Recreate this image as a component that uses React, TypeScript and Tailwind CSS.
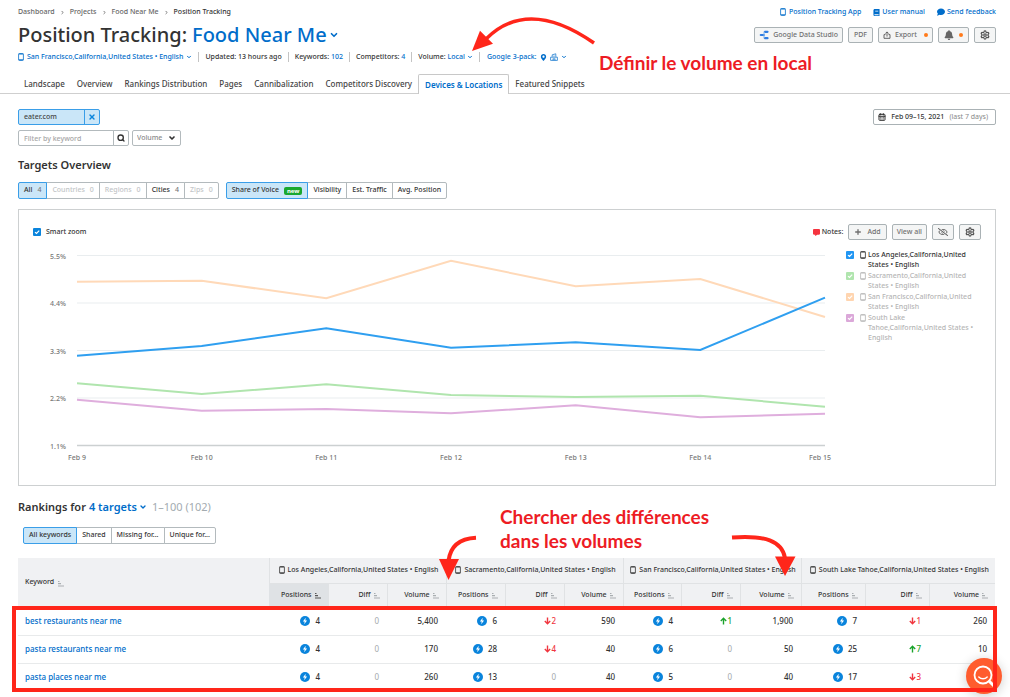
import React from "react";
import { CalendarDays, Settings, ChevronDown, ChevronRight, X, Plus, Search } from "lucide-react";
import { FaBell, FaBook, FaComment, FaCommentAlt, FaMapMarkerAlt, FaRegEyeSlash } from "react-icons/fa";

const sans = "font-['Noto_Sans','Open_Sans',sans-serif]";

function Phone({ className = "" }: { className?: string }) {
  return (
    <svg viewBox="0 0 6 8" className={"h-2 w-1.5 shrink-0 " + className} fill="none" stroke="currentColor" aria-hidden="true">
      <rect x="0.6" y="0.6" width="4.8" height="6.8" rx="0.8" strokeWidth="0.8" />
      <path d="M0.6 1h4.8M0.6 6.8h4.8" strokeWidth="0.9" />
    </svg>
  );
}

function SortIcon({ active = false }: { active?: boolean }) {
  return (
    <svg viewBox="0 0 7 8" className={active ? "h-2 w-[7px] shrink-0 text-[#555]" : "h-2 w-[7px] shrink-0 text-[#a9aeb1]"} stroke="currentColor" aria-hidden="true">
      <path d="M1 2.500h1.500M1 4.600h3M1 7h6" strokeWidth="1.100" fill="none" />
    </svg>
  );
}

function Bolt() {
  return (
    <svg viewBox="0 0 10 10" className="size-2.5 shrink-0" aria-hidden="true">
      <circle cx="5" cy="5" r="5" fill="#0a84dc" />
      <path d="M5.7 1.8 2.9 5.5h1.8l-.5 2.8 2.9-3.8H5.3z" fill="#fff" />
    </svg>
  );
}

const crumbs = ["Dashboard", "Projects", "Food Near Me"];
const tabs = ["Landscape", "Overview", "Rankings Distribution", "Pages", "Cannibalization", "Competitors Discovery", "Devices & Locations", "Featured Snippets"];
const scopes: [string, number][] = [["All", 4], ["Countries", 0], ["Regions", 0], ["Cities", 4], ["Zips", 0]];
const metrics = ["Share of Voice", "Visibility", "Est. Traffic", "Avg. Position"];
const keywordFilters = ["All keywords", "Shared", "Missing for...", "Unique for..."];

const legend = [
  { name: "Los Angeles,California,United States • English", box: "bg-[#2196f3]", text: "text-[#333]" },
  { name: "Sacramento,California,United States • English", box: "bg-[#b0e5ae]", text: "text-[#b5b5b5]" },
  { name: "San Francisco,California,United States • English", box: "bg-[#ffd5b0]", text: "text-[#b5b5b5]" },
  { name: "South Lake Tahoe,California,United States • English", box: "bg-[#dba8d9]", text: "text-[#b5b5b5]" },
];

const xs = [44, 168.7, 293.3, 418, 542.7, 667.3, 792];
const series = [
  { color: "#ffd9b8", ys: [36.7, 35.7, 53.3, 15.7, 41.3, 34, 72] },
  { color: "#b0e5ae", ys: [138.3, 149, 139.3, 150, 152, 150.7, 161.7] },
  { color: "#dfaedd", ys: [154.7, 165.7, 164, 168.3, 160.3, 172.3, 168.7] },
  { color: "#2f9ff0", ys: [110.7, 101, 83.3, 102.7, 97.3, 105, 52.7] },
];
const grid: [string, number][] = [["5.5%", 10.5], ["4.4%", 58], ["3.3%", 105.5], ["2.2%", 153], ["1.1%", 200.5]];

const groups = [
  "Los Angeles,California,United States • English",
  "Sacramento,California,United States • English",
  "San Francisco,California,United States • English",
  "South Lake Tahoe,California,United States • English",
];
const rows: { keyword: string; cells: [number, number, string][] }[] = [
  { keyword: "best restaurants near me", cells: [[4, 0, "5,400"], [6, -2, "590"], [4, 1, "1,900"], [7, -1, "260"]] },
  { keyword: "pasta restaurants near me", cells: [[4, 0, "170"], [28, -4, "40"], [6, 0, "50"], [25, 7, "10"]] },
  { keyword: "pasta places near me", cells: [[4, 0, "260"], [13, 0, "40"], [5, 0, "40"], [17, -3, "10"]] },
];
const columnWidths = [
  "w-[251px]", "w-[59px]", "w-[59px]", "w-[59px]", "w-[59px]", "w-[59px]", "w-[59px]",
  "w-[58px]", "w-[59px]", "w-[61px]", "w-[64px]", "w-[64px]", "w-[66px]",
];

const button = "flex h-4 items-center rounded-xs border border-[#aab2b5] bg-[#f4f5f5] text-[#707070]";

function Segmented({ items, label }: { items: React.ReactNode[]; label: string }) {
  return (
    <div role="group" aria-label={label} className="flex">
      {items.map((item, i) => (
        <button
          key={i}
          className={
            i === 0
              ? "relative flex h-[17px] items-center rounded-l-xs border border-[#3a9ee8] bg-[#cae6f8] px-[5px]"
              : "-ml-px flex h-[17px] items-center border border-[#b3babd] bg-white px-[5px] last:rounded-r-xs"
          }
        >
          {item}
        </button>
      ))}
    </div>
  );
}

function Diff({ value }: { value: number }) {
  if (value === 0) return <span className="font-normal text-[#a3a9ac]">0</span>;
  return (
    <span className={value > 0 ? "flex items-center justify-end text-[#1ba32c]" : "flex items-center justify-end text-[#f0363f]"}>
      <svg viewBox="0 0 7 8" className="h-2 w-[7px]" fill="none" stroke="currentColor" strokeWidth="1.400" aria-hidden="true">
        <path d={value > 0 ? "M3.500 7.500V1.500M.8 4 3.500 1.300 6.200 4" : "M3.500.5V6.500M.8 4l2.700 2.700L6.200 4"} />
      </svg>
      {Math.abs(value)}
    </span>
  );
}

function Header() {
  return (
    <header>
      <div className="flex justify-between pt-[7px] pr-3.5 pl-[18px]">
        <div>
          <nav aria-label="Breadcrumb" className="flex h-2.5 items-center gap-[5px] text-[7px] text-[#666]">
            {crumbs.map((c) => (
              <React.Fragment key={c}>
                <a href="#">{c}</a>
                <ChevronRight className="size-[5px]" strokeWidth={4} />
              </React.Fragment>
            ))}
            <span className="text-[#333]">Position Tracking</span>
          </nav>
          <h1 className="mt-1 flex h-7 items-center gap-[5px] text-[20px] font-medium text-[#333]">
            Position Tracking:
            <button className="flex items-center text-[#006dca]">
              Food Near Me
              <ChevronDown className="ml-0.5 size-2.5" strokeWidth={4} />
            </button>
          </h1>
          <div className="mt-[3px] flex h-2.5 items-center text-[7px] text-[#333]">
            <button className="flex items-center gap-[3px] pr-1.5 text-[#006dca]">
              <Phone /> San Francisco,California,United States • English
              <ChevronDown className="size-1.5" strokeWidth={4} />
            </button>
            <span className="border-l border-[#c4c4c4] px-1.5">Updated: 13 hours ago</span>
            <span className="border-l border-[#c4c4c4] px-1.5">Keywords: <a href="#" className="text-[#006dca]">102</a></span>
            <span className="border-l border-[#c4c4c4] px-1.5">Competitors: <a href="#" className="text-[#006dca]">4</a></span>
            <span className="flex items-center gap-0.5 border-l border-[#c4c4c4] px-1.5">
              Volume:
              <button className="flex items-center gap-0.5 text-[#006dca]">Local <ChevronDown className="size-1.5" strokeWidth={4} /></button>
            </span>
            <button className="flex items-center gap-[3px] border-l border-[#c4c4c4] px-[7px] text-[#006dca]">
              Google 3-pack: <FaMapMarkerAlt className="size-[7px]" />
              <svg viewBox="0 0 8 8" className="size-2" fill="none" stroke="currentColor" strokeWidth="0.7" aria-hidden="true">
                <path d="M.6 7.400V4.200h1.600V1.800L5.800.8v3.400h1.600v3.200zM3.200 3.200h1.600M2.200 4.800h3.600M3 7.400V6h2v1.400" />
              </svg>
              <ChevronDown className="size-1.5" strokeWidth={4} />
            </button>
          </div>
        </div>
        <div className="flex flex-col items-end">
          <div className="flex h-2.5 items-center gap-3 text-[7px] text-[#006dca]">
            <a href="#" className="flex items-center gap-[3px]"><Phone /> Position Tracking App</a>
            <a href="#" className="flex items-center gap-0.5"><FaBook className="size-[7px]" /> User manual</a>
            <a href="#" className="flex items-center gap-0.5"><FaComment className="size-2" /> Send feedback</a>
          </div>
          <div className="mt-2.5 flex gap-[5px] text-[7px]">
            <button className={button + " gap-1 px-1"}>
              <svg viewBox="0 0 10 10" className="size-2.5" fill="none" stroke="#2f7de1" strokeLinecap="round" aria-hidden="true">
                <path d="M6 1.800H8.500M1.800 5h3M6 8.200h2.500" strokeWidth="2.200" />
                <path d="M5 2v6" stroke="#7db2ee" strokeWidth="1" />
              </svg>
              Google Data Studio
            </button>
            <button className={button + " px-[5px]"}>PDF</button>
            <button className={button + " gap-1 px-1"}>
              <svg viewBox="0 0 8 8" className="size-2" fill="none" stroke="#555" strokeWidth="0.9" aria-hidden="true">
                <path d="M2.500 3.600H1v3.700h6V3.600H5.500M4 5.600V1M2.300 2.600 4 .9l1.700 1.700" />
              </svg>
              Export
              <span className="ml-[3px] size-1 rounded-full bg-[#ff7a1a]" />
            </button>
            <button aria-label="Notifications" className={button + " gap-[5px] px-[5px]"}>
              <FaBell className="size-2.5 text-[#666]" />
              <span className="size-1 rounded-full bg-[#ff7a1a]" />
            </button>
            <button aria-label="Settings" className={button + " px-[5px]"}><Settings className="size-2.5 text-[#555]" strokeWidth={3} /></button>
          </div>
        </div>
      </div>
      <nav aria-label="Reports" className="mt-3 flex h-5 border-b border-[#cfcfcf] pl-[18px] text-[8px] text-[#444]">
        {tabs.map((t) =>
          t === "Devices & Locations" ? (
            <a key={t} href="#" aria-current="page" className="-mb-px flex items-center rounded-t-xs border border-b-0 border-[#c8c8c8] bg-white px-1.5 font-semibold text-[#006dca]">{t}</a>
          ) : (
            <a key={t} href="#" className="flex items-center px-1.5">{t}</a>
          )
        )}
      </nav>
    </header>
  );
}

function Filters() {
  return (
    <div className="mt-[15px] flex items-start justify-between">
      <div>
        <div className="flex h-4 w-[82px] rounded-xs border border-[#3a9ee8] bg-[#cae6f8] text-[7px] text-[#444]">
          <span className="flex flex-1 items-center pl-[5px]">eater.com</span>
          <button aria-label="Remove eater.com" className="flex w-[15px] items-center justify-center border-l border-[#3a9ee8] text-[#0a84dc]">
            <X className="size-2" strokeWidth={4} />
          </button>
        </div>
        <div className="mt-[5px] flex gap-[3px] text-[7px]">
          <form className="flex" onSubmit={(e) => e.preventDefault()}>
            <input aria-label="Filter by keyword" placeholder="Filter by keyword" className="h-4 w-24 rounded-l-xs border border-[#b3babd] px-[5px] placeholder:text-[#a5a5a5]" />
            <button aria-label="Search" className="-ml-px flex h-4 w-4 items-center justify-center rounded-r-xs border border-[#b3babd] text-[#333]">
              <Search className="size-2" strokeWidth={4} />
            </button>
          </form>
          <div className="relative flex items-center">
            <select aria-label="Volume" className="h-4 w-[49px] appearance-none rounded-xs border border-[#b3babd] bg-white px-1 text-[#8a8a8a]">
              <option>Volume</option>
            </select>
            <ChevronDown className="pointer-events-none absolute right-[5px] size-2 text-[#333]" strokeWidth={5} />
          </div>
        </div>
      </div>
      <button className="flex h-4 items-center gap-[5px] rounded-xs border border-[#aab2b5] px-1 pr-[7px] text-[7px] text-[#333]">
        <CalendarDays className="size-2" strokeWidth={3} /> Feb 09–15, 2021 <span className="font-normal text-[#888]">(last 7 days)</span>
      </button>
    </div>
  );
}

function ChartCard() {
  return (
    <section aria-label="Share of voice" className="mt-2.5 border border-[#cdd0d1] px-3.5 pt-3.5 pb-[21px]">
      <div className="flex h-4 items-center justify-between text-[7px] text-[#333]">
        <label className="flex items-center gap-[5px]">
          <Check box="bg-[#0a84dc]" /> Smart zoom
        </label>
        <div className="flex items-center gap-[5px]">
          <span className="flex items-center gap-0.5"><FaCommentAlt className="size-[7px] text-[#f5333f]" /> Notes:</span>
          <button className={button + " gap-[5px] px-[5px]"}><Plus className="size-2" strokeWidth={4} />Add</button>
          <button className={button + " px-1"}>View all</button>
          <button aria-label="Hide notes" className={button + " px-[5px]"}><FaRegEyeSlash className="size-2.5 text-[#555]" /></button>
          <button aria-label="Chart settings" className={button + " px-[5px]"}><Settings className="size-2.5 text-[#555]" strokeWidth={3} /></button>
        </div>
      </div>
      <div className="mt-[5px] flex items-start">
        <svg viewBox="0 0 813 219" className="min-w-0 flex-1 text-[7px]" fill="#777">
          {grid.map(([label, y], i) => (
            <g key={label}>
              <text x="33" y={y + 3} textAnchor="end">{label}</text>
              <line x1="44" x2="792" y1={y} y2={y} stroke={i === 4 ? "#ccd0d1" : "#e9edef"} strokeWidth={i === 4 ? 1.5 : 1} />
            </g>
          ))}
          {xs.map((x, i) => (
            <text key={x} x={i === 6 ? 787 : x} y="215" textAnchor="middle">{"Feb " + (9 + i)}</text>
          ))}
          {series.map((s) => (
            <polyline key={s.color} points={s.ys.map((y, i) => xs[i] + "," + y).join(" ")} fill="none" stroke={s.color} strokeWidth="2" />
          ))}
        </svg>
        <ul className="flex w-[135px] flex-col gap-px pt-[5px] text-[7px] leading-[10px]">
          {legend.map((l) => (
            <li key={l.name}>
              <label className={"flex items-start " + l.text}>
                <span className="flex h-2.5 items-center"><Check box={l.box} /></span>
                <span className="mr-0.5 ml-1.5 flex h-2.5 items-center"><Phone /></span>
                <span className="w-[112px]">{l.name}</span>
              </label>
            </li>
          ))}
        </ul>
      </div>
    </section>
  );
}

function Check({ box }: { box: string }) {
  return (
    <span className="relative flex size-2">
      <input type="checkbox" defaultChecked className={"size-2 appearance-none rounded-[1px] " + box} />
      <svg viewBox="0 0 8 8" className="pointer-events-none absolute inset-0 size-2" fill="none" stroke="#fff" strokeWidth="1.2" aria-hidden="true">
        <path d="M2 4.100 3.500 5.500 6.200 2.700" />
      </svg>
    </span>
  );
}

function RankingsTable() {
  return (
    <div className="relative mt-3.5 mr-px">
      <button aria-label="Search help" className="absolute -right-[7px] -bottom-0.5 flex size-9 items-center justify-center rounded-full bg-[#ff5c2e] shadow-[0_2px_12px_rgba(0,0,0,0.2)]">
        <svg viewBox="0 0 24 24" className="size-6" fill="none" stroke="#fff" strokeWidth="1.8" strokeLinecap="round" aria-hidden="true">
          <circle cx="11" cy="11" r="8.500" />
          <path d="M6.800 13c2.200 2.400 6.200 2.400 8.400 0" strokeWidth="1.400" />
          <path d="m17.500 17.500 4 4" strokeWidth="3" />
        </svg>
      </button>
      <table className="w-full table-fixed border-collapse text-[7px] text-[#333]">
        <colgroup>{columnWidths.map((w, i) => <col key={i} className={w} />)}</colgroup>
        <thead className="bg-[#f0f1f3]">
          <tr className="h-[25px]">
            <th rowSpan={2} scope="col" className="pl-[7px] text-left font-medium">
              <span className="flex items-center gap-[3px]">Keyword <SortIcon /></span>
            </th>
            {groups.map((g) => (
              <th key={g} colSpan={3} scope="colgroup" className="border-b border-l border-[#e0e2e4] pl-0.5 font-medium">
                <span className="flex items-center justify-center gap-[3px] whitespace-nowrap"><Phone />{g}</span>
              </th>
            ))}
          </tr>
          <tr className="h-6">
            {groups.map((g, gi) =>
              ["Positions", "Diff", "Volume"].map((c, ci) => (
                <th key={g + c} scope="col" className={gi === 0 && ci === 0 ? "bg-[#dfe2e5] pr-[7px] font-medium" : "border-l border-[#e0e2e4] pr-[7px] font-medium"}>
                  <span className="flex items-center justify-end gap-0.5">{c} <SortIcon active={gi === 0 && ci === 0} /></span>
                </th>
              ))
            )}
          </tr>
        </thead>
        <tbody className="text-[8px]">
          {rows.map((r) => (
            <tr key={r.keyword} className="h-7 border-b border-[#e8eaeb]">
              <th scope="row" className="pl-[7px] text-left font-medium"><a href="#" className="text-[#006dca]">{r.keyword}</a></th>
              {r.cells.map(([pos, diff, vol], i) => (
                <React.Fragment key={i}>
                  <td className="pr-2"><span className="flex items-center justify-end gap-[5px]"><Bolt />{pos}</span></td>
                  <td className="pr-2 text-right"><Diff value={diff} /></td>
                  <td className="pr-2 text-right">{vol}</td>
                </React.Fragment>
              ))}
            </tr>
          ))}
        </tbody>
      </table>
      <div className="pointer-events-none absolute -right-0.5 bottom-0 -left-1.5 h-[86px] border-4 border-[#ff261a]" />
    </div>
  );
}

function Annotations() {
  return (
    <>
      <svg viewBox="0 0 1010 697" className="pointer-events-none absolute top-0 left-0 h-[697px] w-[1010px]" fill="none" stroke="#ff261a" aria-hidden="true">
        <path d="M594 43Q528-3 486 39" strokeWidth="3.500" />
        <path d="m480 30.700 13 13L472 51z" fill="#ff261a" stroke="none" />
        <path d="M476 537.700Q451 539 448.500 561" strokeWidth="4" />
        <path d="M439 559h20l-10.500 21z" fill="#ff261a" stroke="none" />
        <path d="M732 537.500C765 535 782 541 785 558" strokeWidth="4" />
        <path d="M775 556.500h20.500L785 576z" fill="#ff261a" stroke="none" />
      </svg>
      <p className="absolute top-[51px] left-[599px] font-['Lato',sans-serif] text-[19px] leading-6 font-bold whitespace-nowrap text-[#ed1c24]">Définir le volume en local</p>
      <p className="absolute top-[505px] left-[500px] font-['Lato',sans-serif] text-[19px] leading-6 font-bold whitespace-nowrap text-[#ed1c24]">
        Chercher des différences<br />dans les volumes
      </p>
    </>
  );
}

export default function App() {
  return (
    <div className={"relative overflow-hidden bg-white pb-1.5 font-medium " + sans}>
      <Header />
      <main className="pr-3.5 pl-[18px]">
        <Filters />
        <h2 className="mt-[11px] h-4 text-[11px] leading-4 font-semibold text-[#333]">Targets Overview</h2>
        <div className="mt-[9px] flex gap-[7px] text-[7px] text-[#333]">
          <Segmented
            label="Locations"
            items={scopes.map(([name, n]) => (
              <span className={n ? "flex gap-[5px]" : "flex gap-[5px] text-[#c2c5c7]"}>
                {name} <span className={n ? "text-[#777]" : ""}>{n}</span>
              </span>
            ))}
          />
          <Segmented
            label="Metric"
            items={metrics.map((m, i) => (
              <span className="flex items-center gap-[5px]">
                {m}
                {i === 0 && <span className="rounded-xs bg-[#1aa82f] px-[3px] text-[6px] leading-2 font-bold text-white">new</span>}
              </span>
            ))}
          />
        </div>
        <ChartCard />
        <h2 className="mt-[13px] flex h-4 items-center gap-[3px] text-[11px] font-semibold text-[#333]">
          Rankings for
          <button className="flex items-center gap-0.5 text-[#006dca]">4 targets <ChevronDown className="size-2" strokeWidth={4} /></button>
          <span className="ml-0.5 font-normal text-[#a3abb0]">1–100 (102)</span>
        </h2>
        <div className="mt-3 ml-[5px] text-[7px] text-[#333]">
          <Segmented label="Keywords" items={keywordFilters.map((k) => <span>{k}</span>)} />
        </div>
        <RankingsTable />
      </main>
      <Annotations />
    </div>
  );
}
